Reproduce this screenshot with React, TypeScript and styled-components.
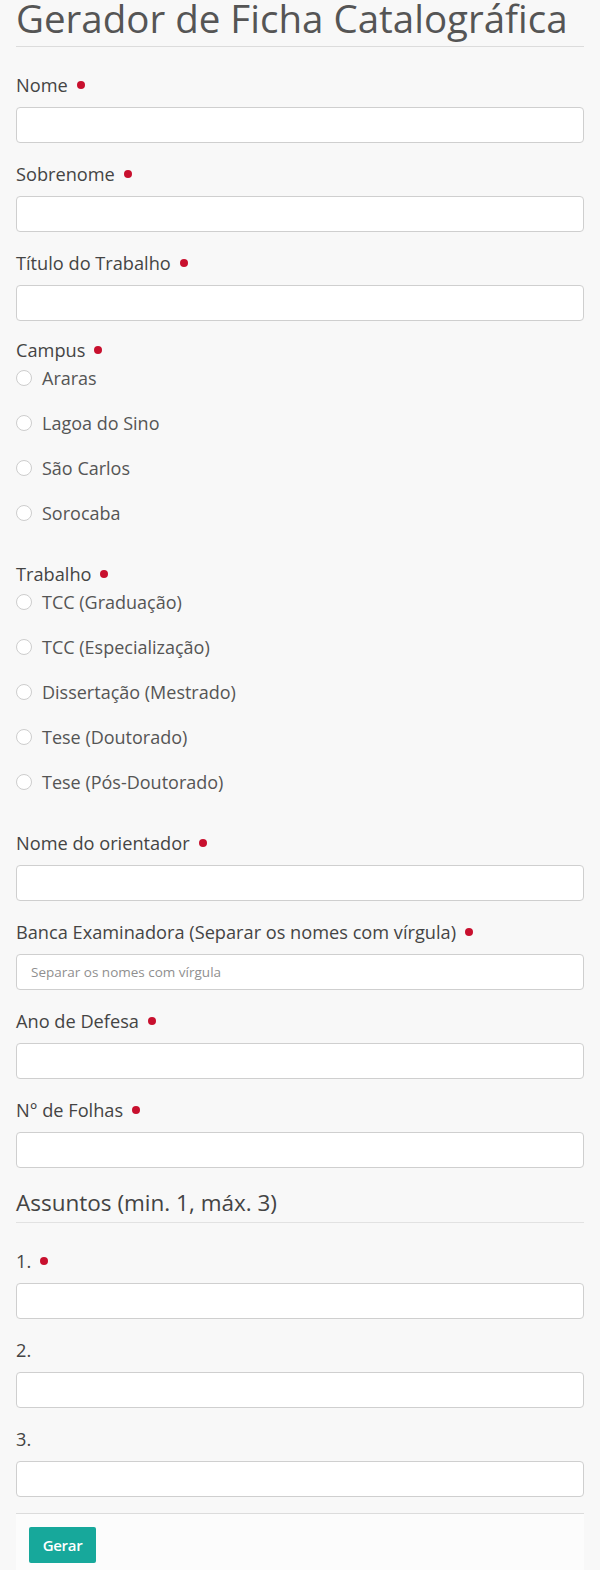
import React from "react";
import styled, { createGlobalStyle } from "styled-components";

const Global = createGlobalStyle`
  html, body { margin: 0; padding: 0; background: #f8f8f8; }
  body { font-family: "Open Sans", "Noto Sans", sans-serif; color: #444; }
  * { box-sizing: border-box; }
`;

const Page = styled.div`
  padding: 0 16px 8px 16px;
  width: 600px;
`;

const Title = styled.h1`
  margin: 0;
  font-size: 38.5px;
  font-weight: 400;
  line-height: 36px;
  color: #555;
  padding-bottom: 10px;
  border-bottom: 1px solid #dcdcdc;
  white-space: nowrap;
`;

const Form = styled.form`
  display: flex;
  flex-direction: column;
  padding-top: 26px;
`;

const Field = styled.div<{ $after?: number }>`
  display: flex;
  flex-direction: column;
  margin-bottom: ${(p) => p.$after ?? 19}px;
`;

const Label = styled.label`
  display: flex;
  align-items: center;
  font-size: 18.2px;
  font-weight: 500;
  line-height: 24px;
  color: #444;
  margin-bottom: 10px;
`;

const GroupLabel = styled(Label)`
  margin-bottom: 4px;
`;

const Dot = styled.span`
  display: inline-block;
  width: 8px;
  height: 8px;
  border-radius: 50%;
  background: #c8102e;
  margin-left: 9px;
`;

const Input = styled.input`
  height: 36px;
  width: 100%;
  border: 1px solid #cfcfcf;
  border-radius: 4px;
  background: #fff;
  padding: 0 14px;
  font-family: "Open Sans", sans-serif;
  font-size: 13.5px;
  color: #555;
  outline: none;
  &::placeholder { color: #8f8f8f; }
`;

const RadioList = styled.div`
  display: flex;
  flex-direction: column;
  gap: 21px;
`;

const RadioRow = styled.label`
  display: flex;
  align-items: center;
  height: 24px;
  font-size: 18px;
  font-weight: 400;
  color: #555;
`;

const Circle = styled.span`
  width: 16px;
  height: 16px;
  border-radius: 50%;
  border: 1px solid #cdcdcd;
  background: #fff;
  margin-right: 10px;
  flex: none;
`;

const SectionTitle = styled.h2`
  margin: 3px 0 26px 0;
  font-size: 22.5px;
  font-weight: 400;
  line-height: 28px;
  color: #444;
  padding-bottom: 5px;
  border-bottom: 1px solid #e2e2e2;
`;

const Footer = styled.div`
  border-top: 1px solid #dcdcdc;
  background: #fcfcfc;
  padding: 13px 13px 8px 13px;
`;

const Button = styled.button`
  height: 36px;
  width: 67px;
  border: none;
  border-radius: 2px;
  background: #17a89b;
  color: #fff;
  font-family: "Open Sans", sans-serif;
  font-size: 15px;
  font-weight: 600;
  letter-spacing: -0.3px;
`;

const TextField = ({ label, required, placeholder, after }: { label: string; required?: boolean; placeholder?: string; after?: number }) => (
  <Field $after={after}>
    <Label>
      {label}
      {required && <Dot />}
    </Label>
    <Input placeholder={placeholder} />
  </Field>
);

const RadioGroup = ({ label, options, after }: { label: string; options: string[]; after?: number }) => (
  <Field $after={after}>
    <GroupLabel>
      {label}
      <Dot />
    </GroupLabel>
    <RadioList>
      {options.map((o) => (
        <RadioRow key={o}>
          <Circle />
          {o}
        </RadioRow>
      ))}
    </RadioList>
  </Field>
);

export default function App() {
  return (
    <Page>
      <Global />
      <Title>Gerador de Ficha Catalográfica</Title>
      <Form onSubmit={(e) => e.preventDefault()}>
        <TextField label="Nome" required />
        <TextField label="Sobrenome" required />
        <TextField label="Título do Trabalho" required after={17} />
        <RadioGroup label="Campus" options={["Araras", "Lagoa do Sino", "São Carlos", "Sorocaba"]} after={37} />
        <RadioGroup
          label="Trabalho"
          options={["TCC (Graduação)", "TCC (Especialização)", "Dissertação (Mestrado)", "Tese (Doutorado)", "Tese (Pós-Doutorado)"]}
          after={37}
        />
        <TextField label="Nome do orientador" required />
        <TextField label="Banca Examinadora (Separar os nomes com vírgula)" required placeholder="Separar os nomes com vírgula" />
        <TextField label="Ano de Defesa" required />
        <TextField label="N° de Folhas" required after={18} />
        <SectionTitle>Assuntos (min. 1, máx. 3)</SectionTitle>
        <TextField label="1." required />
        <TextField label="2." />
        <TextField label="3." after={16} />
        <Footer>
          <Button type="submit">Gerar</Button>
        </Footer>
      </Form>
    </Page>
  );
}
